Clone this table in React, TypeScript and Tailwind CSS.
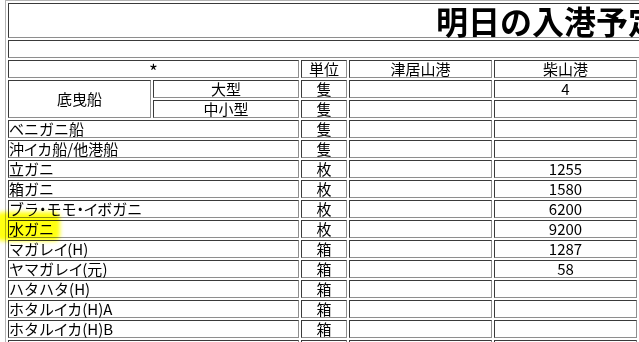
const ports = ['津居山港', '柴山港', '香住港'];

type Row = { name: string; unit: string; values: string[] };

const rows: Row[] = [
  { name: 'ベニガニ船', unit: '隻', values: ['', '', ''] },
  { name: '沖イカ船/他港船', unit: '隻', values: ['', '', ''] },
  { name: '立ガニ', unit: '枚', values: ['', '1255', ''] },
  { name: '箱ガニ', unit: '枚', values: ['', '1580', ''] },
  { name: 'ブラ・モモ・イボガニ', unit: '枚', values: ['', '6200', ''] },
  { name: '水ガニ', unit: '枚', values: ['', '9200', ''] },
  { name: 'マガレイ(H)', unit: '箱', values: ['', '1287', ''] },
  { name: 'ヤマガレイ(元)', unit: '箱', values: ['', '58', ''] },
  { name: 'ハタハタ(H)', unit: '箱', values: ['', '', ''] },
  { name: 'ホタルイカ(H)A', unit: '箱', values: ['', '', ''] },
  { name: 'ホタルイカ(H)B', unit: '箱', values: ['', '', ''] },
  { name: 'ホタルイカ(元)', unit: '箱', values: ['', '', ''] },
];

// inset cell border like an old border=1 table
const cell =
  'border border-t-[#3a3a3a] border-l-[#3a3a3a] border-r-[#8e8e8e] border-b-[#8e8e8e] p-0 h-[18px] leading-[16px] whitespace-nowrap';

const nb = (s: string) => (s === '' ? '\u00a0' : s);

// old proportional gothic: middle dots and イ are narrow
function Name({ text }: { text: string }) {
  return (
    <>
      {text.split('').map((ch, i) =>
        ch === '・' || ch === 'イ' ? (
          <span key={i} className="[font-feature-settings:'palt']">{ch}</span>
        ) : (
          ch
        )
      )}
    </>
  );
}

export default function App() {
  return (
    <div className="relative w-screen h-screen overflow-hidden bg-white text-black text-[15px] font-['Noto_Sans_CJK_JP','Noto_Sans',sans-serif]">
      <table className="ml-[5px] w-[780px] table-fixed border-separate border-spacing-[2px] border border-t-[#b4b4b4] border-l-[#b4b4b4] border-r-[#444] border-b-[#444]">
        <colgroup>
          <col className="w-[143px]" />
          <col className="w-[146px]" />
          <col className="w-[46px]" />
          <col className="w-[143px]" />
          <col className="w-[143px]" />
          <col className="w-[143px]" />
        </colgroup>
        <tbody>
          <tr>
            <td colSpan={6} className={`${cell} h-[35px] text-left pl-[427px] text-[32px] font-bold leading-[33px]`}>
              明日の入港予定
            </td>
          </tr>
          <tr>
            <td colSpan={6} className={cell}>{nb('')}</td>
          </tr>
          <tr>
            <td colSpan={2} className={`${cell} text-center`}>
              <span className="inline-block h-[16px] align-top overflow-visible text-[19px] leading-[20px]">*</span>
            </td>
            <td className={`${cell} text-center`}>単位</td>
            {ports.map((p) => (
              <td key={p} className={`${cell} text-center`}>{p}</td>
            ))}
          </tr>
          <tr>
            <td rowSpan={2} className={`${cell} text-center align-middle`}>底曳船</td>
            <td className={`${cell} text-center`}>大型</td>
            <td className={`${cell} text-center`}>隻</td>
            <td className={`${cell} text-center`}>{nb('')}</td>
            <td className={`${cell} text-center`}>4</td>
            <td className={`${cell} text-center`}>{nb('')}</td>
          </tr>
          <tr>
            <td className={`${cell} text-center`}>中小型</td>
            <td className={`${cell} text-center`}>隻</td>
            <td className={`${cell} text-center`}>{nb('')}</td>
            <td className={`${cell} text-center`}>{nb('')}</td>
            <td className={`${cell} text-center`}>{nb('')}</td>
          </tr>
          {rows.map((r) => (
            <tr key={r.name}>
              <td colSpan={2} className={`${cell} text-left`}>
                <Name text={r.name} />
              </td>
              <td className={`${cell} text-center`}>{r.unit}</td>
              {r.values.map((v, i) => (
                <td key={i} className={`${cell} text-center`}>{nb(v)}</td>
              ))}
            </tr>
          ))}
        </tbody>
      </table>

      {/* highlighter mark over 水ガニ */}
      <div className="pointer-events-none absolute left-[-4px] top-[212px] w-[64px] h-[29px] rounded-md bg-[#ffff10] blur-[2px] mix-blend-multiply" />
    </div>
  );
}
